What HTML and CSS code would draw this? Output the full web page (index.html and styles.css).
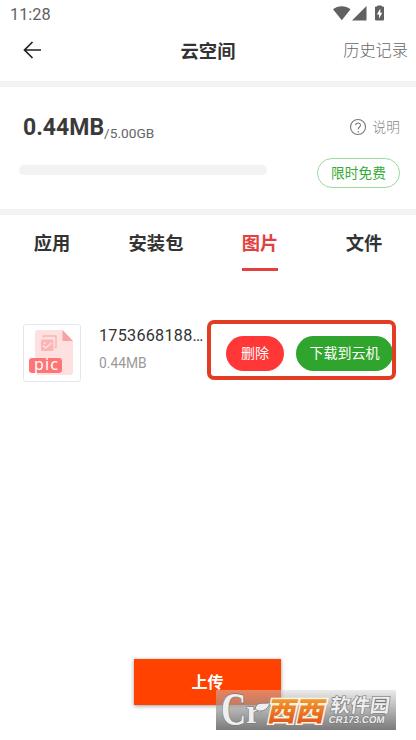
FILE: index.html
```html
<!DOCTYPE html>
<html lang="zh-CN">
<head>
<meta charset="utf-8">
<title>云空间</title>
<link rel="stylesheet" href="styles.css">
</head>
<body>
<div class="screen">
  <div class="status">
    <span class="clock">11:28</span>
    <svg class="status-icons" width="54" height="18" viewBox="0 0 54 18">
      <path d="M0 4.200C5 .1 12.500 .1 17.500 4.200L8.800 15.200Z"/>
      <path d="M19 15.500H33.500V1Z"/>
      <path d="M42.500 2H44.500V1H48.500V2H50.500V15H42.500Z" stroke="#616161" stroke-linejoin="round"/>
      <path d="M47.300 3.500L43.800 9.400H46V13.500L49.300 7.700H47.300Z" fill="#fff"/>
    </svg>
  </div>
  <header class="header">
    <svg class="back" width="20" height="20" viewBox="0 0 20 20"><path d="M10.500 2L2.500 10L10.500 18M2.500 10H19"/></svg>
    <h1 class="title">云空间</h1>
    <span class="history">历史记录</span>
  </header>
  <section class="storage">
    <div class="storage-row">
      <div class="quota"><strong>0.44MB</strong><span>/5.00GB</span></div>
      <div class="help">
        <svg width="18" height="18" viewBox="0 0 18 18"><circle cx="9" cy="9" r="7.500"/><path d="M6.700 7.300C6.700 4.300 11.500 4.300 11.500 7.200C11.500 9 9.200 9.100 9.200 11.300M9.200 13V14.500"/></svg>
        <span>说明</span>
      </div>
    </div>
    <div class="usage-row">
      <div class="meter"></div>
      <span class="free">限时免费</span>
    </div>
  </section>
  <nav class="tabs">
    <span class="tab">应用</span>
    <span class="tab">安装包</span>
    <span class="tab active">图片</span>
    <span class="tab">文件</span>
  </nav>
  <main class="list">
    <div class="file">
      <div class="thumb">
        <svg width="56" height="56" viewBox="0 0 56 56">
          <path d="M14 5H38.500L49 16V47Q49 50 46 50H14Q11 50 11 47V8Q11 5 14 5Z" fill="#ffe0e0"/>
          <path d="M38.500 5L49 16H38.500Z" fill="#f8a3a3"/>
          <path d="M19.500 12.500V11H32V22.500H30.500" fill="none" stroke="#fbb4b4" stroke-width="1.500" stroke-linejoin="round"/>
          <rect x="17" y="14.500" width="12.500" height="11.500" rx="1.500" fill="#fab6b6"/>
          <path d="M18.700 20.500L21.500 23L27.500 18" fill="none" stroke="#ffe0e0" stroke-width="1.500"/>
          <circle cx="20.500" cy="18" r="1" fill="#ffe0e0"/>
          <rect x="5" y="33" width="33" height="15" rx="3" fill="#ff7474"/>
          <text class="pic" x="10" y="44.500" textLength="24">pic</text>
        </svg>
      </div>
      <div class="info">
        <div class="name">1753668188…</div>
        <div class="size">0.44MB</div>
      </div>
      <div class="actions">
        <span class="btn delete">删除</span>
        <span class="btn download">下载到云机</span>
      </div>
      <div class="highlight"></div>
    </div>
  </main>
  <footer class="footer"><span class="upload">上传</span></footer>
  <div class="watermark">
    <svg width="180" height="40" viewBox="0 0 180 40">
      <defs>
        <linearGradient id="gold" x1="0" y1="0" x2="0" y2="1"><stop offset="0" stop-color="#f4b536"/><stop offset="1" stop-color="#e04818"/></linearGradient>
      </defs>
      <g transform="translate(5 35) scale(.92 1.2)"><text class="mark-c" x="0" y="0">C</text></g>
      <text class="mark-r" x="30" y="33">r</text>
      <path d="M39 19C41 10 48 15 54 12.500C52 21 44 23 39 19Z" fill="#eee" stroke="#777" stroke-width=".8"/>
      <g transform="translate(50 0) skewX(-12)">
        <text class="west" x="7" y="30.500" textLength="57" lengthAdjust="spacingAndGlyphs">西西</text>
      </g>
      <g transform="translate(114 0) skewX(-8)">
        <text class="park" x="3" y="22.500" textLength="59" lengthAdjust="spacingAndGlyphs">软件园</text>
        <text class="domain" x="3" y="33.500" textLength="56" lengthAdjust="spacingAndGlyphs">CR173.COM</text>
      </g>
    </svg>
  </div>
</div>
</body>
</html>
```
FILE: styles.css
```css
* { box-sizing: border-box; }
body { margin: 0; background: #fff; color: #333; font-family: Roboto, "Noto Sans CJK SC", sans-serif; }
.screen { position: relative; width: 416px; height: 740px; overflow: hidden; display: flex; flex-direction: column; }
.status { height: 28px; padding: 5px 29px 0 10px; display: flex; justify-content: space-between; }
.clock { font-size: 16.300px; line-height: 20px; color: #616161; }
.status-icons { fill: #616161; }
.header { height: 59px; border-bottom: 6px solid #f3f3f3; padding: 0 8px 9px 22px; display: grid; grid-template-columns: 86px 1fr 100px; align-items: center; }
.back { fill: none; stroke: #222; stroke-width: 1.700; }
.title { margin: 3px 0 0; text-align: center; font-size: 18.300px; line-height: 26px; font-weight: 700; }
.history { margin-top: 1px; text-align: right; font-size: 16.200px; line-height: 24px; color: #666; font-weight: 300; white-space: nowrap; }
.storage { height: 128px; border-bottom: 6px solid #f3f3f3; padding: 24px 16px 0 19px; }
.storage-row { display: flex; height: 32px; justify-content: space-between; align-items: center; padding-left: 4px; }
.quota { display: flex; align-items: baseline; }
.quota strong { font-size: 23px; color: #3a3a3a; }
.quota span { font-size: 13.700px; color: #666; position: relative; top: 3px; }
.help { display: flex; align-items: center; gap: 6px; font-size: 13.700px; color: #888; font-weight: 300; }
.help span { margin-top: -2px; }
.help svg { fill: none; stroke: #777; stroke-width: 1.100; }
.usage-row { display: flex; justify-content: space-between; margin-top: 15px; }
.meter { width: 248px; height: 10px; border-radius: 5px; background: #f2f2f2; margin-top: 7px; }
.free { width: 83px; height: 30px; border: 1px solid #9bda9d; border-radius: 15px; color: #36ab36; font-size: 13.700px; line-height: 28px; text-align: center; }
.tabs { height: 56px; display: grid; grid-template-columns: repeat(4, 1fr); justify-items: center; }
.tab { height: 56px; padding-top: 15px; font-size: 18.300px; line-height: 27px; font-weight: 700; }
.active { color: #e34141; border-bottom: 3px solid #e34141; }
.list { flex: 1; padding-top: 53px; }
.file { position: relative; height: 58px; display: flex; padding-left: 23px; }
.thumb { width: 58px; height: 58px; border: 1px solid #e7e5f2; border-radius: 3px; }
.thumb svg { display: block; }
.pic { font: 16px "Noto Sans", sans-serif; fill: #fff; }
.info { width: 127px; padding-left: 18px; }
.name { font-size: 16.200px; line-height: 22px; letter-spacing: .25px; white-space: nowrap; margin-top: 1px; }
.size { font-size: 13.800px; line-height: 20px; color: #999; margin-top: 6px; }
.actions { display: flex; align-items: center; gap: 12px; margin-left: 18px; }
.btn { height: 35px; border-radius: 18px; color: #fff; font-size: 14px; line-height: 35px; text-align: center; white-space: nowrap; }
.delete { width: 58px; background: #ff3737; }
.download { width: 97px; background: #2fa52d; }
.highlight { position: absolute; left: 207px; top: -4px; width: 189px; height: 60px; border: 4px solid #e23d23; border-radius: 7px; }
.footer { height: 81px; display: flex; justify-content: center; align-items: flex-start; }
.upload { width: 147px; height: 46px; margin-right: 1px; background: #ff4200; box-shadow: 0 1px 4px #0006; color: #fff; font-size: 16px; font-weight: 700; line-height: 47px; text-align: center; }
.watermark { position: absolute; left: 216px; top: 690px; width: 180px; height: 40px; background: linear-gradient(rgba(210,210,210,.45), rgba(115,115,115,.95)); }
.watermark svg { display: block; }
.watermark text { stroke: #777; stroke-width: 1.200px; paint-order: stroke; fill: #eee; }
.watermark .mark-c { font: 700 38px "Liberation Serif", serif; }
.watermark .mark-r { font: 700 33px "Liberation Serif", serif; }
.watermark .west { font: 900 27px "Noto Sans CJK SC", sans-serif; fill: url(#gold); stroke: #fff3df; stroke-width: 3px; }
.watermark .park { font: 700 19px "Noto Sans CJK SC", sans-serif; }
.watermark .domain { font: 700 10px "Liberation Sans", sans-serif; }
```
